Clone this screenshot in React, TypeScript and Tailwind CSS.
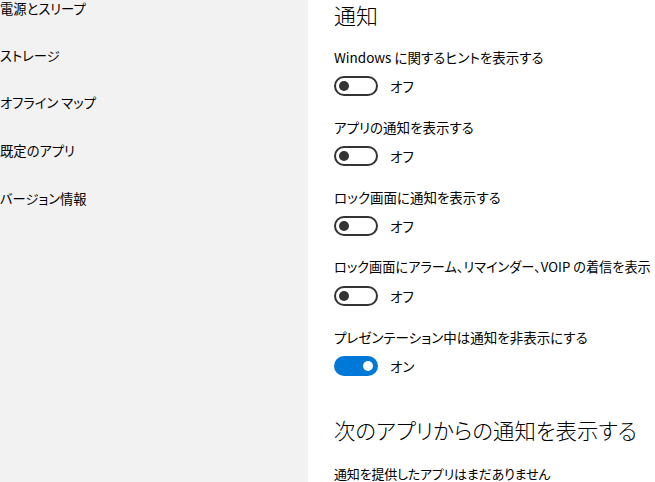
import React from "react";

const font = { fontFamily: '"Noto Sans CJK JP", "Noto Sans", sans-serif' };

function Toggle({ on }: { on: boolean }) {
  return (
    <div className="flex items-center h-[20px]">
      {on ? (
        <div className="w-[44px] h-[20px] rounded-full bg-[#0078d7] flex items-center justify-end pr-[5px]">
          <div className="w-[10px] h-[10px] rounded-full bg-white" />
        </div>
      ) : (
        <div className="w-[44px] h-[20px] rounded-full border-2 border-[#333333] flex items-center pl-[3px]">
          <div className="w-[10px] h-[10px] rounded-full bg-[#333333]" />
        </div>
      )}
      <span className="ml-[12px] text-[13.5px] text-black leading-[20px]">{on ? "オン" : "オフ"}</span>
    </div>
  );
}

const settings: { label: string; on: boolean; cls: string }[] = [
  { label: "Windows に関するヒントを表示する", on: false, cls: "text-[13.5px]" },
  { label: "アプリの通知を表示する", on: false, cls: "text-[13.5px]" },
  { label: "ロック画面に通知を表示する", on: false, cls: "text-[13.5px]" },
  { label: "ロック画面にアラーム、リマインダー、VOIP の着信を表示", on: false, cls: "text-[13.2px]" },
  { label: "プレゼンテーション中は通知を非表示にする", on: true, cls: "text-[13.5px]" },
];

const nav: { t: string; h: string }[] = [
  { t: "電源とスリープ", h: "h-[47px]" },
  { t: "ストレージ", h: "h-[47px]" },
  { t: "オフライン マップ", h: "h-[48px]" },
  { t: "既定のアプリ", h: "h-[48px]" },
  { t: "バージョン情報", h: "h-[48px]" },
];

export default function App() {
  return (
    <div
      className="w-[655px] h-[482px] overflow-hidden flex bg-white text-black [font-feature-settings:'palt']"
      style={font}
    >
      <div className="w-[308px] h-full bg-[#f2f2f2] shrink-0">
        <div className="mt-[-15px] flex flex-col">
          {nav.map((n) => (
            <div key={n.t} className={`${n.h} shrink-0 flex items-center text-[13.3px] whitespace-nowrap`}>
              {n.t}
            </div>
          ))}
        </div>
      </div>
      <div className="pl-[26px] flex flex-col whitespace-nowrap">
        <div className="shrink-0 h-[28px] flex items-center text-[22px] leading-[28px] font-light">通知</div>
        <div className="shrink-0 mt-[19px] flex flex-col">
          {settings.map((s) => (
            <div key={s.label} className="shrink-0 flex flex-col h-[70px]">
              <div className={`h-[20px] flex items-center leading-[20px] ${s.cls}`}>{s.label}</div>
              <div className="mt-[9px]">
                <Toggle on={s.on} />
              </div>
            </div>
          ))}
        </div>
        <div className="shrink-0 mt-[17px] h-[32px] flex items-center text-[21.4px] leading-[32px] font-light">
          次のアプリからの通知を表示する
        </div>
        <div className="shrink-0 mt-[18px] h-[20px] flex items-center text-[13px] leading-[20px] tracking-[-0.2px]">
          通知を提供したアプリはまだありません
        </div>
      </div>
    </div>
  );
}
